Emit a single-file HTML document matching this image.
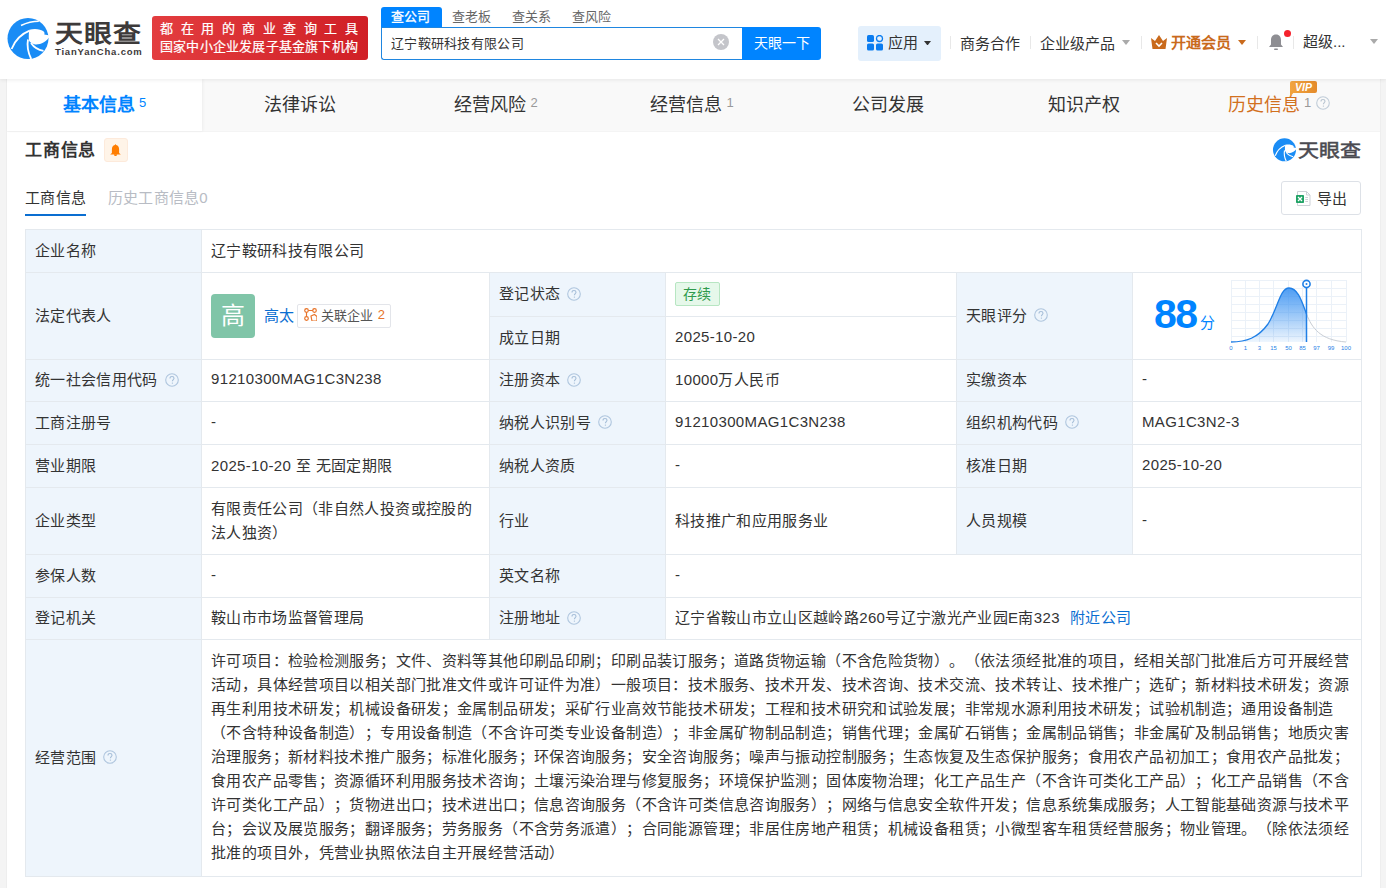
<!DOCTYPE html>
<html lang="zh-CN"><head><meta charset="utf-8">
<style>
*{box-sizing:border-box;margin:0;padding:0}
html,body{width:1386px;height:888px;overflow:hidden}
body{text-spacing-trim:space-all;background:#f4f4f4;font-family:"Liberation Sans",sans-serif;color:#333;position:relative}
.a{position:absolute;white-space:nowrap}
#hdr{position:absolute;left:0;top:0;width:1386px;height:79px;background:#fff;box-shadow:0 1px 4px rgba(0,0,0,.08);z-index:3}
#card{position:absolute;left:7px;top:79px;width:1373px;height:809px;background:#fff;box-shadow:0 0 1px rgba(0,0,0,.15)}
#tabs{position:absolute;left:0;top:0;width:1373px;height:53px;background:#f9f9f9;border-bottom:1px solid #f4f4f4}
.tab{position:absolute;top:0;height:52px;font-size:18px;color:#333;line-height:52px;text-align:center}
.tab sup{font-size:13px;color:#999;vertical-align:baseline;position:relative;top:-4.5px;margin-left:4px}
.c{position:absolute;border:1px solid #e4e9ee;font-size:15px;color:#333;letter-spacing:0.35px;padding-left:9px;padding-bottom:4px;display:flex;align-items:center;white-space:nowrap}
.l{background:#eef5fc}
.q{display:inline-block;position:relative;top:1px;width:14px;height:14px;border:1.3px solid #aec8e2;border-radius:50%;font-size:10px;color:#9cb6d2;text-align:center;line-height:12px;margin-left:7px;font-weight:normal;letter-spacing:0}
.rel{display:inline-flex;align-items:center;height:24px;margin-top:4px;border:1px solid #e3e5ea;border-radius:2px;padding:0 5px 4px 6px;margin-left:2px;font-size:13px;color:#555;letter-spacing:0}
.tag{display:inline-block;margin-top:2px;height:24px;line-height:22px;padding:0 7px;border:1px solid #b7e6c2;background:#e6f8ea;color:#2f9a4c;border-radius:2px;font-size:14px}
.sl{height:24px;line-height:24px;font-size:15px;letter-spacing:0.38px;white-space:nowrap}
.qs{display:inline-block;margin-left:7px;position:relative;top:1px;flex:none}
</style></head><body>
<div id="hdr">
  <!-- logo -->
  <svg class="a" style="left:4px;top:14px" width="48" height="48" viewBox="0 0 48 48">
    <circle cx="24" cy="24.5" r="20.5" fill="#1a8cf5"/>
    <path d="M25.4 15.7C30 14.4 36.5 14.6 40 17.8C40.6 18.6 40.6 19.8 40.3 20.6L46 21.5C43 28.5 35 31.2 30.3 30.3C27.5 29.5 25.4 28 24.9 26C24.6 22 24.8 18 25.4 15.7Z" fill="#fff"/>
    <path d="M7.6 35C11 26 17 20 25.6 16.6" stroke="#fff" stroke-width="1.8" fill="none"/>
    <path d="M17 11.5C23 8.6 29 7.2 34.8 7.2" stroke="#fff" stroke-width="1.6" fill="none"/>
    <path d="M24 25.5C22.8 32 24 38.5 27.2 45" stroke="#fff" stroke-width="1.8" fill="none"/>
    <path d="M27 29C30 33.5 34.5 36 39.5 36.8" stroke="#fff" stroke-width="1.8" fill="none"/>
  </svg>
  <div class="a" style="left:55px;top:15px;font-size:28px;font-weight:bold;color:#3d3a3a;letter-spacing:1.2px;transform:scaleY(0.85);transform-origin:0 0">天眼查</div>
  <div class="a" style="left:55px;top:46px;font-size:9.5px;font-weight:bold;color:#3d3a3a;letter-spacing:0.8px">TianYanCha.com</div>
  <div class="a" style="left:152px;top:16px;width:216px;height:44px;border-radius:3px;background:linear-gradient(90deg,#e33d3f,#d01f26)"></div>
  <div class="a" style="left:160px;top:18px;font-size:13px;color:#fff;letter-spacing:7.5px;-webkit-text-stroke:0.2px #fff">都在用的商业查询工具</div>
  <div class="a" style="left:160px;top:35.5px;font-size:13px;color:#fff;letter-spacing:0.2px;-webkit-text-stroke:0.2px #fff">国家中小企业发展子基金旗下机构</div>
  <!-- search -->
  <div class="a" style="left:381px;top:7px;width:61px;height:21px;background:#0084ff;border-radius:3px 3px 0 0"></div>
  <div class="a" style="left:391px;top:6px;font-size:13px;color:#fff;-webkit-text-stroke:0.3px #fff">查公司</div>
  <div class="a" style="left:452px;top:6px;font-size:13px;color:#666">查老板</div>
  <div class="a" style="left:512px;top:6px;font-size:13px;color:#666">查关系</div>
  <div class="a" style="left:572px;top:6px;font-size:13px;color:#666">查风险</div>
  <div class="a" style="left:381px;top:27px;width:362px;height:33px;border:1px solid #1f86e0;border-right:none;border-radius:0 0 0 3px;background:#fff"></div>
  <div class="a" style="left:391px;top:33px;font-size:13px;color:#333;letter-spacing:0.3px">辽宁鞍研科技有限公司</div>
  <svg class="a" style="left:713px;top:34px" width="16" height="16" viewBox="0 0 16 16"><circle cx="8" cy="8" r="8" fill="#c4c5ca"/><path d="M5 5L11 11M11 5L5 11" stroke="#fff" stroke-width="1.3"/></svg>
  <div class="a" style="left:742px;top:27px;width:79px;height:33px;background:#0084ff;border-radius:0 3px 3px 0"></div>
  <div class="a" style="left:754px;top:31.5px;font-size:14px;color:#fff">天眼一下</div>
  <!-- right nav -->
  <div class="a" style="left:858px;top:26px;width:83px;height:35px;background:#e4f0fc;border-radius:3px"></div>
  <svg class="a" style="left:867px;top:35px" width="17" height="16" viewBox="0 0 17 16">
    <rect x="0" y="0" width="7" height="7" rx="1.6" fill="#0a7cf0"/>
    <circle cx="12.5" cy="3.5" r="3" fill="none" stroke="#0a7cf0" stroke-width="1.3"/>
    <rect x="0" y="8.5" width="7" height="7" rx="1.6" fill="#0a7cf0"/>
    <rect x="9" y="8.5" width="7" height="7" rx="1.6" fill="#0a7cf0"/>
  </svg>
  <div class="a" style="left:888px;top:31px;font-size:15px;color:#333">应用</div>
  <svg class="a" style="left:924px;top:40.5px" width="7" height="4.5"><path d="M0 0H7L3.5 4.5Z" fill="#333"/></svg>
  <div class="a" style="left:950px;top:36px;width:1px;height:13px;background:#e8e8e8"></div>
  <div class="a" style="left:960px;top:31.5px;font-size:15px;color:#333">商务合作</div>
  <div class="a" style="left:1030px;top:36px;width:1px;height:13px;background:#e8e8e8"></div>
  <div class="a" style="left:1040px;top:31.5px;font-size:15px;color:#333">企业级产品</div>
  <svg class="a" style="left:1122px;top:40px" width="8" height="5"><path d="M0 0H8L4 5Z" fill="#aaa"/></svg>
  <div class="a" style="left:1141px;top:36px;width:1px;height:13px;background:#e8e8e8"></div>
  <svg class="a" style="left:1151px;top:35px" width="16" height="14" viewBox="0 0 16 14"><path d="M0 3L4 6L8 0L12 6L16 3L14.5 14H1.5Z" fill="#c96a1c"/><path d="M5 8L8 11L11 8" stroke="#fff" stroke-width="1.6" fill="none"/></svg>
  <div class="a" style="left:1171px;top:31px;font-size:15px;font-weight:bold;color:#c96a1c">开通会员</div>
  <svg class="a" style="left:1238px;top:40px" width="8" height="5"><path d="M0 0H8L4 5Z" fill="#c96a1c"/></svg>
  <div class="a" style="left:1257px;top:36px;width:1px;height:13px;background:#e8e8e8"></div>
  <svg class="a" style="left:1268px;top:33px" width="16" height="18" viewBox="0 0 16 18"><path d="M8 1.5C4.5 1.5 3 4 3 7V11.5L1 14H15L13 11.5V7C13 4 11.5 1.5 8 1.5Z" fill="#8e8e93"/><rect x="6" y="15.5" width="4" height="1.6" rx=".8" fill="#8e8e93"/></svg>
  <div class="a" style="left:1284px;top:30px;width:7px;height:7px;border-radius:50%;background:#f5222d"></div>
  <div class="a" style="left:1293px;top:36px;width:1px;height:13px;background:#e8e8e8"></div>
  <div class="a" style="left:1303px;top:30px;font-size:15px;color:#333">超级...</div>
  <svg class="a" style="left:1370px;top:39px" width="8" height="5"><path d="M0 0H8L4 5Z" fill="#aaa"/></svg>
</div>

<div id="card">
  <div id="tabs">
    <div class="tab" style="left:0;width:195px;box-shadow:1px 0 3px rgba(0,0,0,.05);background:#fff;color:#0084ff;font-weight:bold">基本信息<sup style="color:#0084ff;font-weight:normal">5</sup></div>
    <div class="tab" style="left:195px;width:196px">法律诉讼</div>
    <div class="tab" style="left:391px;width:196px">经营风险<sup>2</sup></div>
    <div class="tab" style="left:587px;width:196px">经营信息<sup>1</sup></div>
    <div class="tab" style="left:783px;width:196px">公司发展</div>
    <div class="tab" style="left:979px;width:196px">知识产权</div>
    <div class="tab" style="left:1221px;width:120px;color:#d2701e;text-align:left">历史信息<sup>1</sup></div>
  </div>
</div>
<div class="a" style="left:1290px;top:81px;width:27px;height:12px;border-radius:2px;background:linear-gradient(90deg,#f2a541,#e48b2b);z-index:2"></div>
<svg class="a" style="left:1289px;top:91px;z-index:2" width="6" height="6"><path d="M1 0H6L1 6Z" fill="#f0a13e"/></svg>
<div class="a" style="left:1290px;top:81px;width:27px;height:12px;line-height:12px;text-align:center;font-size:10.5px;font-weight:bold;font-style:italic;color:#fff;z-index:2">VIP</div>
<svg class="a" style="left:1316px;top:96px" width="14" height="14" viewBox="0 0 14 14"><circle cx="7" cy="7" r="6.3" fill="none" stroke="#c0ccd8" stroke-width="1.1"/><path d="M5 5.4C5 4.2 5.9 3.5 7 3.5S9 4.2 9 5.3C9 6.5 7.4 6.7 7.4 8.2" fill="none" stroke="#b8c4d0" stroke-width="1.1"/><circle cx="7.4" cy="10.1" r="0.7" fill="#b8c4d0"/></svg>
<div id="body">
  <div class="a" style="left:25px;top:135.5px;font-size:17px;font-weight:bold;color:#333;letter-spacing:0.8px">工商信息</div>
  <div class="a" style="left:104px;top:138px;width:24px;height:24px;background:#fff4e8;border:1px solid #fdeadb;border-radius:3px"></div>
  <svg class="a" style="left:110px;top:143.5px" width="11" height="12.5" viewBox="0 0 11 12.5"><path d="M5.5 0.3C5.9 0.3 6.1 0.6 6.1 1C8.2 1.4 9.1 3.2 9.1 5.2V9L10.8 10.4H0.2L1.9 9V5.2C1.9 3.2 2.8 1.4 4.9 1C4.9 0.6 5.1 0.3 5.5 0.3Z" fill="#ff7d00"/><path d="M3.9 10.3H7.1C7.1 11.4 6.4 12.2 5.5 12.2S3.9 11.4 3.9 10.3Z" fill="#ff7d00"/></svg>
  <!-- small logo -->
  <svg class="a" style="left:1271px;top:136px" width="27" height="27" viewBox="0 0 48 48">
    <circle cx="24" cy="24.5" r="20.5" fill="#1a8cf5"/>
    <path d="M25.4 15.7C30 14.4 36.5 14.6 40 17.8C40.6 18.6 40.6 19.8 40.3 20.6L46 21.5C43 28.5 35 31.2 30.3 30.3C27.5 29.5 25.4 28 24.9 26C24.6 22 24.8 18 25.4 15.7Z" fill="#fff"/>
    <path d="M7.6 35C11 26 17 20 25.6 16.6" stroke="#fff" stroke-width="2" fill="none"/>
    <path d="M24 25.5C22.8 32 24 38.5 27.2 45" stroke="#fff" stroke-width="2" fill="none"/>
    <path d="M27 29C30 33.5 34.5 36 39.5 36.8" stroke="#fff" stroke-width="2" fill="none"/>
  </svg>
  <div class="a" style="left:1298px;top:136px;font-size:21px;font-weight:normal;-webkit-text-stroke:0.6px #4a4a50;color:#4a4a50;transform:scaleY(0.88);transform-origin:0 0">天眼查</div>
  <!-- subtabs -->
  <div class="a" style="left:25px;top:185.5px;font-size:15px;color:#333;letter-spacing:0.3px">工商信息</div>
  <div class="a" style="left:25px;top:214px;width:61px;height:2px;background:#0a6ed1"></div>
  <div class="a" style="left:108px;top:185.5px;font-size:15px;color:#b8bcc4;letter-spacing:0.2px">历史工商信息0</div>
  <div class="a" style="left:1281px;top:181px;width:80px;height:34px;border:1px solid #dde1e7;border-radius:3px;background:#fff"></div>
  <svg class="a" style="left:1295px;top:190px" width="17" height="17" viewBox="0 0 17 17">
    <path d="M2.5 1.5H11.5L15 5V15.5H2.5Z" fill="#fff" stroke="#cdd1d7" stroke-width="1"/>
    <path d="M11.5 1.5V5H15" fill="none" stroke="#cdd1d7" stroke-width="1"/>
    <rect x="1" y="5" width="8" height="8" rx="0.8" fill="#21a366"/>
    <path d="M3 7L7 11M7 7L3 11" stroke="#fff" stroke-width="1.3"/>
    <path d="M10.3 7.5H13M10.3 9.5H13M10.3 11.5H13" stroke="#c9cdd3" stroke-width="0.9"/>
  </svg>
  <div class="a" style="left:1317px;top:187px;font-size:15px;color:#333">导出</div>
</div>

<div id="tbl">
<div class="c l" style="left:25px;top:229px;width:177px;height:44px;">企业名称</div>
<div class="c" style="left:201px;top:229px;width:1161px;height:44px;">辽宁鞍研科技有限公司</div>
<div class="c l" style="left:25px;top:272px;width:177px;height:88px;">法定代表人</div>
<div class="c" style="left:201px;top:272px;width:289px;height:88px;"><div style="width:44px;height:44px;margin-top:4px;background:#80c5a8;border-radius:4px;color:#fff;font-size:24px;text-align:center;line-height:44px">高</div><span style="color:#0a6ed1;margin-left:9px">高太</span><span class="rel"><svg width="13" height="13" viewBox="0 0 13 13" style="margin-right:4px"><circle cx="2.5" cy="2.5" r="1.8" fill="none" stroke="#e8742a" stroke-width="1.2"/><circle cx="10.5" cy="2.5" r="1.8" fill="none" stroke="#e8742a" stroke-width="1.2"/><circle cx="2.5" cy="10.5" r="1.8" fill="none" stroke="#e8742a" stroke-width="1.2"/><path d="M4.3 2.5H8.7M2.5 4.3V8.7M7 8L10.5 6.5L13 8.5V13H8Z" stroke="#e8742a" stroke-width="1.2" fill="none"/></svg>关联企业<span style="color:#e8742a;margin-left:5px">2</span></span></div>
<div class="c l" style="left:489px;top:272px;width:177px;height:45px;">登记状态<svg class="qs" width="14" height="14" viewBox="0 0 14 14"><circle cx="7" cy="7" r="6.3" fill="none" stroke="#afc6de" stroke-width="1.1"/><path d="M5 5.4C5 4.2 5.9 3.5 7 3.5S9 4.2 9 5.3C9 6.5 7.4 6.7 7.4 8.2" fill="none" stroke="#a6bed8" stroke-width="1.1"/><circle cx="7.4" cy="10.1" r="0.7" fill="#a6bed8"/></svg></div>
<div class="c" style="left:665px;top:272px;width:292px;height:45px;"><span class="tag">存续</span></div>
<div class="c l" style="left:489px;top:316px;width:177px;height:44px;">成立日期</div>
<div class="c" style="left:665px;top:316px;width:292px;height:44px;">2025-10-20</div>
<div class="c l" style="left:956px;top:272px;width:177px;height:88px;">天眼评分<svg class="qs" width="14" height="14" viewBox="0 0 14 14"><circle cx="7" cy="7" r="6.3" fill="none" stroke="#afc6de" stroke-width="1.1"/><path d="M5 5.4C5 4.2 5.9 3.5 7 3.5S9 4.2 9 5.3C9 6.5 7.4 6.7 7.4 8.2" fill="none" stroke="#a6bed8" stroke-width="1.1"/><circle cx="7.4" cy="10.1" r="0.7" fill="#a6bed8"/></svg></div>
<div class="c" style="left:1132px;top:272px;width:230px;height:88px;"><span id="score"></span></div>
<div class="c l" style="left:25px;top:359px;width:177px;height:43px;">统一社会信用代码<svg class="qs" width="14" height="14" viewBox="0 0 14 14"><circle cx="7" cy="7" r="6.3" fill="none" stroke="#afc6de" stroke-width="1.1"/><path d="M5 5.4C5 4.2 5.9 3.5 7 3.5S9 4.2 9 5.3C9 6.5 7.4 6.7 7.4 8.2" fill="none" stroke="#a6bed8" stroke-width="1.1"/><circle cx="7.4" cy="10.1" r="0.7" fill="#a6bed8"/></svg></div>
<div class="c" style="left:201px;top:359px;width:289px;height:43px;">91210300MAG1C3N238</div>
<div class="c l" style="left:489px;top:359px;width:177px;height:43px;">注册资本<svg class="qs" width="14" height="14" viewBox="0 0 14 14"><circle cx="7" cy="7" r="6.3" fill="none" stroke="#afc6de" stroke-width="1.1"/><path d="M5 5.4C5 4.2 5.9 3.5 7 3.5S9 4.2 9 5.3C9 6.5 7.4 6.7 7.4 8.2" fill="none" stroke="#a6bed8" stroke-width="1.1"/><circle cx="7.4" cy="10.1" r="0.7" fill="#a6bed8"/></svg></div>
<div class="c" style="left:665px;top:359px;width:292px;height:43px;">10000万人民币</div>
<div class="c l" style="left:956px;top:359px;width:177px;height:43px;">实缴资本</div>
<div class="c" style="left:1132px;top:359px;width:230px;height:43px;">-</div>
<div class="c l" style="left:25px;top:401px;width:177px;height:44px;">工商注册号</div>
<div class="c" style="left:201px;top:401px;width:289px;height:44px;">-</div>
<div class="c l" style="left:489px;top:401px;width:177px;height:44px;">纳税人识别号<svg class="qs" width="14" height="14" viewBox="0 0 14 14"><circle cx="7" cy="7" r="6.3" fill="none" stroke="#afc6de" stroke-width="1.1"/><path d="M5 5.4C5 4.2 5.9 3.5 7 3.5S9 4.2 9 5.3C9 6.5 7.4 6.7 7.4 8.2" fill="none" stroke="#a6bed8" stroke-width="1.1"/><circle cx="7.4" cy="10.1" r="0.7" fill="#a6bed8"/></svg></div>
<div class="c" style="left:665px;top:401px;width:292px;height:44px;">91210300MAG1C3N238</div>
<div class="c l" style="left:956px;top:401px;width:177px;height:44px;">组织机构代码<svg class="qs" width="14" height="14" viewBox="0 0 14 14"><circle cx="7" cy="7" r="6.3" fill="none" stroke="#afc6de" stroke-width="1.1"/><path d="M5 5.4C5 4.2 5.9 3.5 7 3.5S9 4.2 9 5.3C9 6.5 7.4 6.7 7.4 8.2" fill="none" stroke="#a6bed8" stroke-width="1.1"/><circle cx="7.4" cy="10.1" r="0.7" fill="#a6bed8"/></svg></div>
<div class="c" style="left:1132px;top:401px;width:230px;height:44px;">MAG1C3N2-3</div>
<div class="c l" style="left:25px;top:444px;width:177px;height:44px;">营业期限</div>
<div class="c" style="left:201px;top:444px;width:289px;height:44px;">2025-10-20 至 无固定期限</div>
<div class="c l" style="left:489px;top:444px;width:177px;height:44px;">纳税人资质</div>
<div class="c" style="left:665px;top:444px;width:292px;height:44px;">-</div>
<div class="c l" style="left:956px;top:444px;width:177px;height:44px;">核准日期</div>
<div class="c" style="left:1132px;top:444px;width:230px;height:44px;">2025-10-20</div>
<div class="c l" style="left:25px;top:487px;width:177px;height:68px;">企业类型</div>
<div class="c" style="left:201px;top:487px;width:289px;height:68px;"><div style="line-height:24px;white-space:normal;margin-top:3px">有限责任公司（非自然人投资或控股的<br>法人独资）</div></div>
<div class="c l" style="left:489px;top:487px;width:177px;height:68px;">行业</div>
<div class="c" style="left:665px;top:487px;width:292px;height:68px;">科技推广和应用服务业</div>
<div class="c l" style="left:956px;top:487px;width:177px;height:68px;">人员规模</div>
<div class="c" style="left:1132px;top:487px;width:230px;height:68px;">-</div>
<div class="c l" style="left:25px;top:554px;width:177px;height:44px;">参保人数</div>
<div class="c" style="left:201px;top:554px;width:289px;height:44px;">-</div>
<div class="c l" style="left:489px;top:554px;width:177px;height:44px;">英文名称</div>
<div class="c" style="left:665px;top:554px;width:697px;height:44px;">-</div>
<div class="c l" style="left:25px;top:597px;width:177px;height:43px;">登记机关</div>
<div class="c" style="left:201px;top:597px;width:289px;height:43px;">鞍山市市场监督管理局</div>
<div class="c l" style="left:489px;top:597px;width:177px;height:43px;">注册地址<svg class="qs" width="14" height="14" viewBox="0 0 14 14"><circle cx="7" cy="7" r="6.3" fill="none" stroke="#afc6de" stroke-width="1.1"/><path d="M5 5.4C5 4.2 5.9 3.5 7 3.5S9 4.2 9 5.3C9 6.5 7.4 6.7 7.4 8.2" fill="none" stroke="#a6bed8" stroke-width="1.1"/><circle cx="7.4" cy="10.1" r="0.7" fill="#a6bed8"/></svg></div>
<div class="c" style="left:665px;top:597px;width:697px;height:43px;">辽宁省鞍山市立山区越岭路260号辽宁激光产业园E南323<span style="color:#0a6ed1;margin-left:10px">附近公司</span></div>
<div class="c l" style="left:25px;top:639px;width:177px;height:238px;">经营范围<svg class="qs" width="14" height="14" viewBox="0 0 14 14"><circle cx="7" cy="7" r="6.3" fill="none" stroke="#afc6de" stroke-width="1.1"/><path d="M5 5.4C5 4.2 5.9 3.5 7 3.5S9 4.2 9 5.3C9 6.5 7.4 6.7 7.4 8.2" fill="none" stroke="#a6bed8" stroke-width="1.1"/><circle cx="7.4" cy="10.1" r="0.7" fill="#a6bed8"/></svg></div>
<div class="c" style="left:201px;top:639px;width:1161px;height:238px;"><div style="position:absolute;left:9px;top:9px"><div class="sl">许可项目：检验检测服务；文件、资料等其他印刷品印刷；印刷品装订服务；道路货物运输（不含危险货物）。（依法须经批准的项目，经相关部门批准后方可开展经营</div><div class="sl">活动，具体经营项目以相关部门批准文件或许可证件为准）一般项目：技术服务、技术开发、技术咨询、技术交流、技术转让、技术推广；选矿；新材料技术研发；资源</div><div class="sl">再生利用技术研发；机械设备研发；金属制品研发；采矿行业高效节能技术研发；工程和技术研究和试验发展；非常规水源利用技术研发；试验机制造；通用设备制造</div><div class="sl">（不含特种设备制造）；专用设备制造（不含许可类专业设备制造）；非金属矿物制品制造；销售代理；金属矿石销售；金属制品销售；非金属矿及制品销售；地质灾害</div><div class="sl">治理服务；新材料技术推广服务；标准化服务；环保咨询服务；安全咨询服务；噪声与振动控制服务；生态恢复及生态保护服务；食用农产品初加工；食用农产品批发；</div><div class="sl">食用农产品零售；资源循环利用服务技术咨询；土壤污染治理与修复服务；环境保护监测；固体废物治理；化工产品生产（不含许可类化工产品）；化工产品销售（不含</div><div class="sl">许可类化工产品）；货物进出口；技术进出口；信息咨询服务（不含许可类信息咨询服务）；网络与信息安全软件开发；信息系统集成服务；人工智能基础资源与技术平</div><div class="sl">台；会议及展览服务；翻译服务；劳务服务（不含劳务派遣）；合同能源管理；非居住房地产租赁；机械设备租赁；小微型客车租赁经营服务；物业管理。（除依法须经</div><div class="sl">批准的项目外，凭营业执照依法自主开展经营活动）</div></div></div>
<div class="a" style="left:1154px;top:291px;font-size:41px;font-weight:bold;color:#0084ff;letter-spacing:-1.5px">88</div>
<div class="a" style="left:1200px;top:311px;font-size:15px;color:#0084ff">分</div>
<svg class="a" style="left:1226px;top:276px" width="126" height="80" viewBox="0 0 126 80">
 <defs><linearGradient id="g1" x1="0" y1="0" x2="0" y2="1"><stop offset="0" stop-color="#3a92f2" stop-opacity="0.9"/><stop offset="1" stop-color="#2f8cf0" stop-opacity="0.08"/></linearGradient></defs>
 <g stroke="#ebf1f8" stroke-width="1" fill="none">
  <path d="M5.5 4V66M19.5 4V66M33.5 4V66M47.5 4V66M62.5 4V66M76.5 4V66M90.5 4V66M105.5 4V66M120.5 4V66"/>
  <path d="M5 4.5H121M5 12.5H121M5 20.5H121M5 28.5H121M5 36.5H121M5 44.5H121M5 52.5H121M5 60.5H121"/>
 </g>
 <path d="M5 66C20 66 32 62 42 48C52 32 54 12 63 12C72 12 76 26 80.5 38V66Z" fill="url(#g1)"/>
 <path d="M5 66C20 66 32 62 42 48C52 32 54 12 63 12C72 12 76 26 80.5 38" stroke="#1f7fe6" stroke-width="1.3" fill="none"/>
 <path d="M80.5 38C86 52 94 64 120 66" stroke="#c8cdd4" stroke-width="1" fill="none"/>
 <path d="M80.5 9V66" stroke="#1f7fe6" stroke-width="1.5"/>
 <circle cx="80.5" cy="8" r="3.6" fill="#fff" stroke="#1f7fe6" stroke-width="1.6"/>
 <circle cx="80.5" cy="8" r="1" fill="#1f7fe6"/>
 <g font-size="6" fill="#1f7fe6" font-family="Liberation Sans" text-anchor="middle">
  <text x="5" y="74">0</text><text x="19.5" y="74">1</text><text x="33.5" y="74">3</text><text x="47.5" y="74">15</text><text x="62.5" y="74">50</text><text x="76.5" y="74">85</text><text x="90.5" y="74">97</text><text x="105" y="74">99</text><text x="120" y="74">100</text>
 </g>
</svg>
</div>
</body></html>
